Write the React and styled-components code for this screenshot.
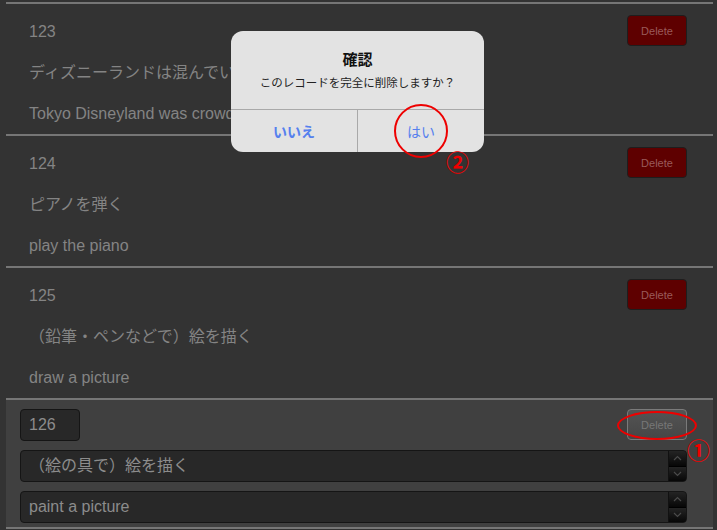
import React from 'react';
import styled, { createGlobalStyle } from 'styled-components';

const GlobalStyle = createGlobalStyle`
  html, body {
    margin: 0;
    padding: 0;
    background: #333333;
  }
  body {
    font-family: "Liberation Sans", "Noto Sans CJK JP", sans-serif;
    width: 717px;
    height: 530px;
    overflow: hidden;
  }
`;

const Page = styled.div`
  position: relative;
  width: 717px;
  height: 530px;
  padding-top: 2px;
  box-sizing: border-box;
`;

const List = styled.div`
  display: flex;
  flex-direction: column;
`;

const Record = styled.div`
  display: flex;
  justify-content: space-between;
  align-items: flex-start;
  box-sizing: border-box;
  height: 132px;
  margin: 0 4px 0 6px;
  padding: 7px 26px 0 23px;
  border-top: 2px solid #767676;
`;

const EditRecord = styled.div`
  display: flex;
  flex-direction: column;
  gap: 9px;
  box-sizing: border-box;
  height: 129px;
  margin: 0 4px 0 6px;
  padding: 9px 26px 4px 14px;
  border-top: 2px solid #767676;
  background: #404040;
`;

const EditHeader = styled.div`
  display: flex;
  justify-content: space-between;
  align-items: flex-start;
`;

const Fields = styled.div`
  display: flex;
  flex-direction: column;
`;

const Line = styled.div`
  height: 41px;
  line-height: 41px;
  font-size: 16px;
  color: #848484;
  white-space: nowrap;
`;

const Input = styled.div`
  position: relative;
  box-sizing: border-box;
  width: ${p => (p.$narrow ? '60px' : '100%')};
  height: 32px;
  line-height: 30px;
  padding-left: 8px;
  font-size: 16px;
  color: #8c8c8c;
  background: #282828;
  border: 1px solid #151515;
  border-radius: 4px;
  white-space: nowrap;
  overflow: hidden;
`;

const Spinner = styled.div`
  position: absolute;
  right: 0;
  top: 0;
  bottom: 0;
  width: 17px;
  display: flex;
  flex-direction: column;
  background: #0a0a0a;
  border-left: 1px solid #111;
`;

const SpinHalf = styled.div`
  flex: 1;
  display: flex;
  align-items: center;
  justify-content: center;
  background: linear-gradient(#242424, #070707);
  & + & {
    border-top: 1px solid #000;
  }
`;

const DeleteButton = styled.button`
  width: 60px;
  height: 31px;
  margin-top: ${p => (p.$disabled ? '0' : '4px')};
  font-family: "Liberation Sans", sans-serif;
  font-size: 11px;
  border-radius: 4px;
  padding: 0;
  color: ${p => (p.$disabled ? '#777' : '#9a5a5a')};
  background: ${p => (p.$disabled ? 'linear-gradient(#545454, #464646)' : '#5e0000')};
  border: 1px solid ${p => (p.$disabled ? '#7a7a7a' : '#1e1e1e')};
  flex-shrink: 0;
`;

const BottomRule = styled.div`
  margin: 0 4px 0 6px;
  border-top: 2px solid #767676;
`;

const Dialog = styled.div`
  position: absolute;
  left: 231px;
  top: 31px;
  width: 253px;
  height: 121px;
  background: #e3e3e3;
  border-radius: 12px;
  display: flex;
  flex-direction: column;
  overflow: hidden;
  font-family: "Noto Sans CJK JP", "Liberation Sans", sans-serif;
`;

const DialogBody = styled.div`
  height: 79px;
  display: flex;
  flex-direction: column;
  align-items: center;
  padding-top: 17px;
  box-sizing: border-box;
  border-bottom: 1px solid #a9a9a9;
`;

const DialogTitle = styled.div`
  font-size: 15px;
  font-weight: bold;
  color: #111;
  line-height: 22px;
`;

const DialogMessage = styled.div`
  font-size: 11.5px;
  color: #222;
  line-height: 18px;
  margin-top: 3px;
`;

const DialogActions = styled.div`
  flex: 1;
  display: flex;
`;

const DialogButton = styled.div`
  flex: 1;
  display: flex;
  align-items: center;
  justify-content: center;
  font-size: 14px;
  color: #5580ee;
  font-weight: ${p => (p.$bold ? 'bold' : 'normal')};
  & + & {
    border-left: 1px solid #a9a9a9;
  }
`;

const Ring = styled.div`
  position: absolute;
  border: 2px solid #ee0000;
  border-radius: 50%;
  box-sizing: border-box;
`;

const Mark = styled.div`
  position: absolute;
  color: #ee0000;
  font-family: "Noto Sans CJK JP", sans-serif;
  font-weight: bold;
  font-size: 23px;
  line-height: 23px;
`;

const Chevron = ({ up }) => (
  <svg width="9" height="6" viewBox="0 0 9 6">
    <path
      d={up ? 'M1 5 L4.5 1.5 L8 5' : 'M1 1 L4.5 4.5 L8 1'}
      fill="none"
      stroke="#4a4a4a"
      strokeWidth="1.2"
    />
  </svg>
);

const SpinBox = () => (
  <Spinner>
    <SpinHalf><Chevron up /></SpinHalf>
    <SpinHalf><Chevron /></SpinHalf>
  </Spinner>
);

const records = [
  { id: '123', ja: 'ディズニーランドは混んでいた', en: 'Tokyo Disneyland was crowded' },
  { id: '124', ja: 'ピアノを弾く', en: 'play the piano' },
  { id: '125', ja: '（鉛筆・ペンなどで）絵を描く', en: 'draw a picture' },
];

export default function App() {
  return (
    <Page>
      <GlobalStyle />
      <List>
        {records.map(r => (
          <Record key={r.id}>
            <Fields>
              <Line>{r.id}</Line>
              <Line>{r.ja}</Line>
              <Line>{r.en}</Line>
            </Fields>
            <DeleteButton>Delete</DeleteButton>
          </Record>
        ))}
        <EditRecord>
          <EditHeader>
            <Input $narrow>126</Input>
            <DeleteButton $disabled>Delete</DeleteButton>
          </EditHeader>
          <Input>
            （絵の具で）絵を描く
            <SpinBox />
          </Input>
          <Input>
            paint a picture
            <SpinBox />
          </Input>
        </EditRecord>
        <BottomRule />
      </List>

      <Dialog>
        <DialogBody>
          <DialogTitle>確認</DialogTitle>
          <DialogMessage>このレコードを完全に削除しますか？</DialogMessage>
        </DialogBody>
        <DialogActions>
          <DialogButton $bold>いいえ</DialogButton>
          <DialogButton>はい</DialogButton>
        </DialogActions>
      </Dialog>

      <Ring style={{ left: 394, top: 104, width: 54, height: 54 }} />
      <Mark style={{ left: 446, top: 150 }}>②</Mark>
      <Ring style={{ left: 617, top: 411, width: 80, height: 29 }} />
      <Mark style={{ left: 687, top: 438 }}>①</Mark>
    </Page>
  );
}
